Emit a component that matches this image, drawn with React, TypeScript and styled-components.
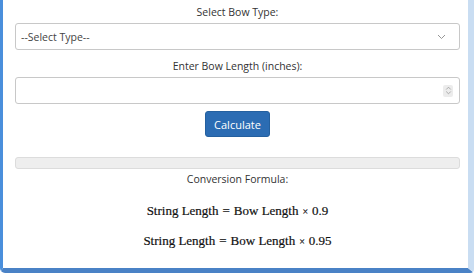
import React from 'react'
import styled, { createGlobalStyle } from 'styled-components'

const GlobalStyle = createGlobalStyle`
    html, body {
        margin: 0;
        padding: 0;
        background: #ffffff;
    }
`

const Card = styled.div`
    box-sizing: border-box;
    width: 474px;
    height: 273px;
    background: #ffffff;
    border-left: 3px solid #4a8fdc;
    border-right: 6px solid #c9ddf2;
    border-bottom: 5px solid #4a82c6;
    border-radius: 0 0 4px 5px;
    padding: 4px 8px 0 12px;
    display: flex;
    flex-direction: column;
    align-items: stretch;
    font-family: 'Open Sans', 'Noto Sans', sans-serif;
    color: #333333;
`

const Label = styled.label`
    display: block;
    text-align: center;
    font-size: 10.5px;
    line-height: 17px;
    margin-bottom: 2px;
`

const Field = styled.div<{ $right: number; $gap: number }>`
    box-sizing: border-box;
    height: 27px;
    border: 1px solid #c8c8c8;
    border-radius: 3px;
    background: #ffffff;
    display: flex;
    align-items: center;
    padding: 0 ${p => p.$right}px 0 5px;
    font-size: 10.5px;
    color: #444444;
    margin-bottom: ${p => p.$gap}px;
`

const Grow = styled.span`
    flex: 1;
`

const Spinner = styled.div`
    width: 10px;
    height: 12px;
    border-radius: 2px;
    background: #ececec;
    display: flex;
    align-items: center;
    justify-content: center;
`

const ButtonRow = styled.div`
    display: flex;
    justify-content: center;
    margin-top: -2px;
`

const Button = styled.button`
    box-sizing: border-box;
    height: 26px;
    width: 65px;
    border: 1px solid #24609f;
    border-radius: 3px;
    background: #2b6cb3;
    color: #ffffff;
    font-family: 'Open Sans', 'Noto Sans', sans-serif;
    font-size: 11px;
    padding: 0;
`

const ResultBar = styled.div`
    box-sizing: border-box;
    height: 12px;
    margin-top: 20px;
    border: 1px solid #dcdcdc;
    border-radius: 3px;
    background: #eeeeee;
`

const FormulaTitle = styled.div`
    text-align: center;
    font-size: 10.5px;
    line-height: 17px;
    margin-top: 2px;
`

const Formula = styled.div<{ $gap: number }>`
    text-align: center;
    font-family: 'Liberation Serif', 'Times New Roman', serif;
    font-size: 13px;
    line-height: 17px;
    color: #111111;
    -webkit-text-stroke: 0.2px #111111;
    margin-top: ${p => p.$gap}px;
`

const Op = styled.span`
    margin: 0 4px;
`

const Times = styled.span`
    font-size: 10px;
    margin: 0 4px;
`

const App: React.FC = () => {
    return (
        <>
            <GlobalStyle />
            <Card>
                <Label>Select Bow Type:</Label>
                <Field $right={13} $gap={8}>
                    <Grow>--Select Type--</Grow>
                    <svg width="9" height="6" viewBox="0 0 9 6">
                        <path d="M1 1 L4.5 4.5 L8 1" fill="none" stroke="#8a8a8a" strokeWidth="0.9" />
                    </svg>
                </Field>
                <Label>Enter Bow Length (inches):</Label>
                <Field $right={6} $gap={9}>
                    <Grow />
                    <Spinner>
                        <svg width="7" height="9" viewBox="0 0 7 9">
                            <path d="M1.2 3.5 L3.5 1.2 L5.8 3.5 M1.2 5.5 L3.5 7.8 L5.8 5.5" fill="none" stroke="#999" strokeWidth="0.8" />
                        </svg>
                    </Spinner>
                </Field>
                <ButtonRow>
                    <Button>Calculate</Button>
                </ButtonRow>
                <ResultBar />
                <FormulaTitle>Conversion Formula:</FormulaTitle>
                <Formula $gap={14}>String Length<Op>=</Op>Bow Length<Times>×</Times>0.9</Formula>
                <Formula $gap={12}>String Length<Op>=</Op>Bow Length<Times>×</Times>0.95</Formula>
            </Card>
        </>
    )
}

export default App
